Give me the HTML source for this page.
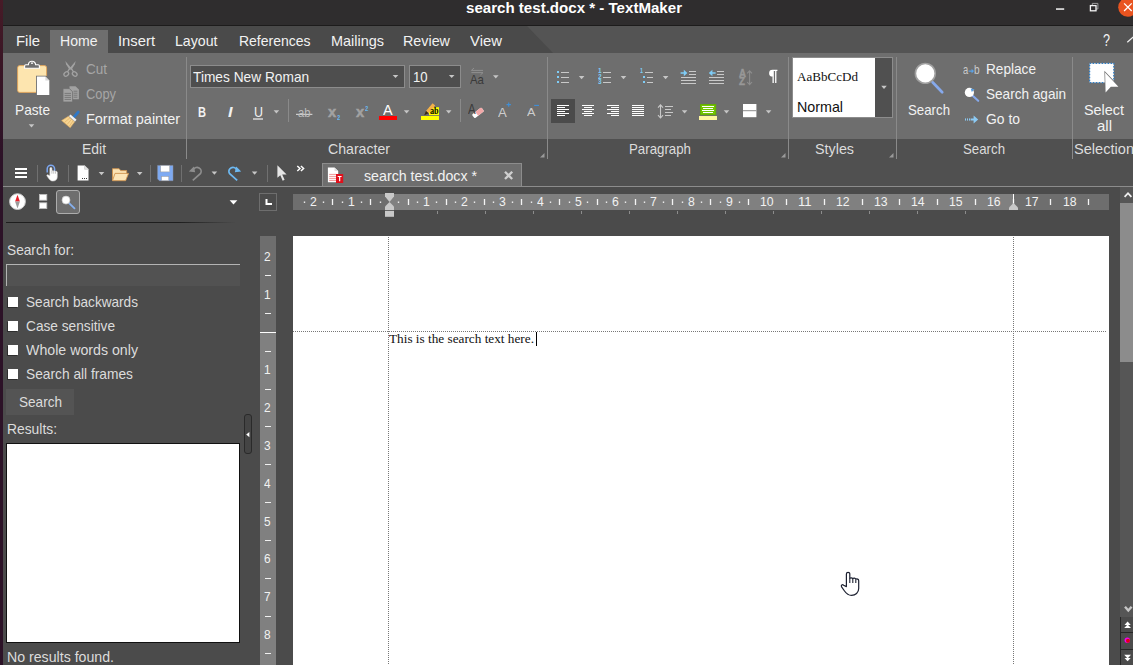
<!DOCTYPE html>
<html><head><meta charset="utf-8"><title>search test.docx * - TextMaker</title>
<style>
html,body{margin:0;padding:0;}
body{width:1133px;height:665px;overflow:hidden;background:#4b4b4b;position:relative;font-family:"Liberation Sans",sans-serif;}
.r{position:absolute;}
.t{position:absolute;white-space:pre;line-height:1;transform-origin:0 0;}
svg{position:absolute;left:0;top:0;}
#root{position:absolute;left:0;top:0;width:1133px;height:665px;overflow:hidden;}
</style></head><body><div id="root">
<div class="r" style="left:0px;top:0px;width:3px;height:665px;background:linear-gradient(#471b27 0px,#3a1625 60px,#2c1227 160px,#2c1227 665px);"></div>
<div class="r" style="left:3px;top:0px;width:1130px;height:25px;background:#2f2d2e;"></div>
<div class="r" style="left:3px;top:25px;width:1130px;height:1px;background:#1d1c1c;"></div>
<div class="r" style="left:3px;top:26px;width:1130px;height:27px;background:#4a4a4a;"></div>
<svg width="1133" height="665" viewBox="0 0 1133 665"><polygon points="527,26 1133,26 1133,53 553,53" fill="#545454"/></svg>
<div class="r" style="left:50px;top:30px;width:58px;height:23px;background:#6e6e6e;"></div>
<div class="r" style="left:3px;top:53px;width:1130px;height:86px;background:#6e6e6e;"></div>
<div class="r" style="left:3px;top:139px;width:1130px;height:47px;background:#505050;"></div>
<div class="r" style="left:3px;top:186px;width:1130px;height:1px;background:#8c8c8c;"></div>
<div class="r" style="left:322px;top:163px;width:200px;height:23px;background:#6e6e6e;box-sizing:border-box;border:1px solid #8c8c8c;border-bottom:none;"></div>
<div class="r" style="left:293px;top:236px;width:816px;height:429px;background:#ffffff;"></div>
<div class="r" style="left:293px;top:194px;width:816px;height:16px;background:#6e6e6e;"></div>
<div class="r" style="left:390px;top:194px;width:623px;height:16px;background:#808080;"></div>
<div class="r" style="left:260px;top:236px;width:16px;height:429px;background:#808080;"></div>
<div class="r" style="left:260px;top:236px;width:16px;height:96px;background:#6e6e6e;"></div>
<div class="r" style="left:1120px;top:187px;width:13px;height:430px;background:#565656;"></div>
<div class="r" style="left:1120px;top:203px;width:13px;height:159px;background:#8c8c8c;"></div>
<div class="r" style="left:1120px;top:617px;width:13px;height:48px;background:#4b4b4b;"></div>
<div class="r" style="left:1120px;top:617px;width:1px;height:48px;background:#262626;"></div>
<div class="r" style="left:1120px;top:632px;width:13px;height:1px;background:#262626;"></div>
<div class="r" style="left:1120px;top:649px;width:13px;height:1px;background:#262626;"></div>
<div class="r" style="left:186px;top:57px;width:1px;height:102px;background:#8a8a8a;"></div>
<div class="r" style="left:547px;top:57px;width:1px;height:102px;background:#8a8a8a;"></div>
<div class="r" style="left:788px;top:57px;width:1px;height:102px;background:#8a8a8a;"></div>
<div class="r" style="left:896px;top:57px;width:1px;height:102px;background:#8a8a8a;"></div>
<div class="r" style="left:1072px;top:57px;width:1px;height:102px;background:#8a8a8a;"></div>
<div class="r" style="left:288px;top:99px;width:1px;height:23px;background:#8a8a8a;"></div>
<div class="r" style="left:460px;top:99px;width:1px;height:23px;background:#8a8a8a;"></div>
<div class="r" style="left:37px;top:165px;width:1px;height:17px;background:#707070;"></div>
<div class="r" style="left:68px;top:165px;width:1px;height:17px;background:#707070;"></div>
<div class="r" style="left:150px;top:165px;width:1px;height:17px;background:#707070;"></div>
<div class="r" style="left:181px;top:165px;width:1px;height:17px;background:#707070;"></div>
<div class="r" style="left:267px;top:165px;width:1px;height:17px;background:#707070;"></div>
<div class="r" style="left:190px;top:65px;width:215px;height:23px;background:#4e4e4e;box-sizing:border-box;border:1px solid #8c8c8c;"></div>
<div class="r" style="left:409px;top:65px;width:52px;height:23px;background:#4e4e4e;box-sizing:border-box;border:1px solid #8c8c8c;"></div>
<div class="r" style="left:551px;top:99px;width:24px;height:24px;background:#4b4b4b;"></div>
<div class="r" style="left:792px;top:57px;width:101px;height:61px;background:#505050;box-sizing:border-box;border:1px solid #8c8c8c;"></div>
<div class="r" style="left:793px;top:58px;width:82px;height:59px;background:#ffffff;"></div>
<div class="r" style="left:6px;top:222px;width:230px;height:1px;background:linear-gradient(90deg,#1e1e1e 0%,#1e1e1e 75%,#4b4b4b 100%);"></div>
<div class="r" style="left:6px;top:264px;width:234px;height:22px;background:#525252;box-sizing:border-box;border-top:1px solid #b4b4b4;border-left:1px solid #b4b4b4;"></div>
<div class="r" style="left:8px;top:297px;width:10px;height:10px;background:#ffffff;box-shadow:-1px 1px 0 #2e2e2e;"></div>
<div class="r" style="left:8px;top:321px;width:10px;height:10px;background:#ffffff;box-shadow:-1px 1px 0 #2e2e2e;"></div>
<div class="r" style="left:8px;top:345px;width:10px;height:10px;background:#ffffff;box-shadow:-1px 1px 0 #2e2e2e;"></div>
<div class="r" style="left:8px;top:369px;width:10px;height:10px;background:#ffffff;box-shadow:-1px 1px 0 #2e2e2e;"></div>
<div class="r" style="left:6px;top:389px;width:68px;height:26px;background:#545454;"></div>
<div class="r" style="left:6px;top:443px;width:234px;height:200px;background:#ffffff;box-sizing:border-box;border:1px solid #111;"></div>
<div class="r" style="left:244px;top:414px;width:8px;height:40px;background:#444444;box-sizing:border-box;border:1px solid #2a2a2a;border-radius:3px;"></div>
<div class="r" style="left:56px;top:190px;width:24px;height:24px;background:#6e6e6e;box-sizing:border-box;border:1px solid #adadad;border-radius:3px;"></div>
<div class="r" style="left:259px;top:193px;width:18px;height:18px;background:#4b4b4b;box-sizing:border-box;border:1px solid #6e6e6e;"></div>
<div class="t" style="left:466.00px;top:0.73px;font-size:14.5px;color:#ffffff;transform:scaleX(1.0402);font-weight:bold;">search test.docx * - TextMaker</div>
<div class="t" style="left:16.00px;top:33.73px;font-size:14.5px;color:#f2f2f2;transform:scaleX(1.0274);">File</div>
<div class="t" style="left:60.00px;top:33.73px;font-size:14.5px;color:#f2f2f2;transform:scaleX(0.9693);">Home</div>
<div class="t" style="left:118.00px;top:33.73px;font-size:14.5px;color:#f2f2f2;transform:scaleX(1.0203);">Insert</div>
<div class="t" style="left:175.00px;top:33.73px;font-size:14.5px;color:#f2f2f2;transform:scaleX(0.9764);">Layout</div>
<div class="t" style="left:238.50px;top:33.73px;font-size:14.5px;color:#f2f2f2;transform:scaleX(0.9642);">References</div>
<div class="t" style="left:330.50px;top:33.73px;font-size:14.5px;color:#f2f2f2;transform:scaleX(0.9965);">Mailings</div>
<div class="t" style="left:403.00px;top:33.73px;font-size:14.5px;color:#f2f2f2;transform:scaleX(0.9876);">Review</div>
<div class="t" style="left:470.00px;top:33.73px;font-size:14.5px;color:#f2f2f2;transform:scaleX(1.0255);">View</div>
<div class="t" style="left:1103.40px;top:31.61px;font-size:17px;color:#f2f2f2;transform:scaleX(0.7406);">?</div>
<div class="t" style="left:14.50px;top:102.73px;font-size:14.5px;color:#f2f2f2;transform:scaleX(0.9440);">Paste</div>
<div class="t" style="left:86.00px;top:61.73px;font-size:14.5px;color:#a6a6a6;transform:scaleX(0.9308);">Cut</div>
<div class="t" style="left:86.00px;top:86.73px;font-size:14.5px;color:#a6a6a6;transform:scaleX(0.8864);">Copy</div>
<div class="t" style="left:86.00px;top:111.73px;font-size:14.5px;color:#f2f2f2;transform:scaleX(0.9970);">Format painter</div>
<div class="t" style="left:193.40px;top:69.73px;font-size:14.5px;color:#f2f2f2;transform:scaleX(0.9467);">Times New Roman</div>
<div class="t" style="left:412.80px;top:69.73px;font-size:14.5px;color:#f2f2f2;transform:scaleX(0.9055);">10</div>
<div class="t" style="left:797.00px;top:70.11px;font-size:13px;color:#111;transform:scaleX(1.0056);font-family:'Liberation Serif', serif;">AaBbCcDd</div>
<div class="t" style="left:797.00px;top:99.73px;font-size:14.5px;color:#111;transform:scaleX(0.9843);">Normal</div>
<div class="t" style="left:908.00px;top:102.73px;font-size:14.5px;color:#f2f2f2;transform:scaleX(0.9143);">Search</div>
<div class="t" style="left:986.00px;top:61.73px;font-size:14.5px;color:#f2f2f2;transform:scaleX(0.9398);">Replace</div>
<div class="t" style="left:986.00px;top:86.73px;font-size:14.5px;color:#f2f2f2;transform:scaleX(0.9362);">Search again</div>
<div class="t" style="left:986.00px;top:111.73px;font-size:14.5px;color:#f2f2f2;transform:scaleX(0.9586);">Go to</div>
<div class="t" style="left:1084.00px;top:102.73px;font-size:14.5px;color:#f2f2f2;transform:scaleX(0.9927);">Select</div>
<div class="t" style="left:1097.00px;top:118.73px;font-size:14.5px;color:#f2f2f2;transform:scaleX(1.0334);">all</div>
<div class="t" style="left:82.00px;top:141.73px;font-size:14.5px;color:#dcdcdc;transform:scaleX(0.9606);">Edit</div>
<div class="t" style="left:328.00px;top:141.73px;font-size:14.5px;color:#dcdcdc;transform:scaleX(0.9738);">Character</div>
<div class="t" style="left:629.00px;top:141.73px;font-size:14.5px;color:#dcdcdc;transform:scaleX(0.9156);">Paragraph</div>
<div class="t" style="left:815.00px;top:141.73px;font-size:14.5px;color:#dcdcdc;transform:scaleX(0.9878);">Styles</div>
<div class="t" style="left:963.00px;top:141.73px;font-size:14.5px;color:#dcdcdc;transform:scaleX(0.9143);">Search</div>
<div class="t" style="left:1074.00px;top:141.73px;font-size:14.5px;color:#dcdcdc;transform:scaleX(1.0058);">Selection</div>
<div class="t" style="left:364.00px;top:168.73px;font-size:14.5px;color:#f2f2f2;transform:scaleX(0.9805);">search test.docx *</div>
<div class="t" style="left:7.00px;top:242.73px;font-size:14.5px;color:#dcdcdc;transform:scaleX(0.9447);">Search for:</div>
<div class="t" style="left:26.00px;top:294.73px;font-size:14.5px;color:#dcdcdc;transform:scaleX(0.9390);">Search backwards</div>
<div class="t" style="left:26.00px;top:318.73px;font-size:14.5px;color:#dcdcdc;transform:scaleX(0.9439);">Case sensitive</div>
<div class="t" style="left:26.00px;top:342.73px;font-size:14.5px;color:#dcdcdc;transform:scaleX(0.9787);">Whole words only</div>
<div class="t" style="left:26.00px;top:366.73px;font-size:14.5px;color:#dcdcdc;transform:scaleX(0.9484);">Search all frames</div>
<div class="t" style="left:19.00px;top:394.73px;font-size:14.5px;color:#dcdcdc;transform:scaleX(0.9361);">Search</div>
<div class="t" style="left:7.00px;top:421.73px;font-size:14.5px;color:#dcdcdc;transform:scaleX(0.9547);">Results:</div>
<div class="t" style="left:7.00px;top:649.73px;font-size:14.5px;color:#dcdcdc;transform:scaleX(0.9761);">No results found.</div>
<div class="t" style="left:389.00px;top:331.86px;font-size:13.3px;color:#111;transform:scaleX(0.9965);font-family:'Liberation Serif', serif;">This is the search text here.</div>
<div class="r" style="left:536px;top:332px;width:1px;height:14px;background:#000;"></div>
<div class="t" style="left:310.00px;top:194.94px;font-size:13.3px;color:#f2f2f2;transform:scaleX(0.9196);">2</div>
<div class="t" style="left:347.80px;top:194.94px;font-size:13.3px;color:#f2f2f2;transform:scaleX(0.9196);">1</div>
<div class="t" style="left:423.40px;top:194.94px;font-size:13.3px;color:#f2f2f2;transform:scaleX(0.9196);">1</div>
<div class="t" style="left:461.20px;top:194.94px;font-size:13.3px;color:#f2f2f2;transform:scaleX(0.9196);">2</div>
<div class="t" style="left:499.00px;top:194.94px;font-size:13.3px;color:#f2f2f2;transform:scaleX(0.9196);">3</div>
<div class="t" style="left:536.80px;top:194.94px;font-size:13.3px;color:#f2f2f2;transform:scaleX(0.9196);">4</div>
<div class="t" style="left:574.60px;top:194.94px;font-size:13.3px;color:#f2f2f2;transform:scaleX(0.9196);">5</div>
<div class="t" style="left:612.40px;top:194.94px;font-size:13.3px;color:#f2f2f2;transform:scaleX(0.9196);">6</div>
<div class="t" style="left:650.20px;top:194.94px;font-size:13.3px;color:#f2f2f2;transform:scaleX(0.9196);">7</div>
<div class="t" style="left:688.00px;top:194.94px;font-size:13.3px;color:#f2f2f2;transform:scaleX(0.9196);">8</div>
<div class="t" style="left:725.80px;top:194.94px;font-size:13.3px;color:#f2f2f2;transform:scaleX(0.9196);">9</div>
<div class="t" style="left:760.20px;top:194.94px;font-size:13.3px;color:#f2f2f2;transform:scaleX(0.9196);">10</div>
<div class="t" style="left:798.00px;top:194.94px;font-size:13.3px;color:#f2f2f2;transform:scaleX(0.9851);">11</div>
<div class="t" style="left:835.80px;top:194.94px;font-size:13.3px;color:#f2f2f2;transform:scaleX(0.9196);">12</div>
<div class="t" style="left:873.60px;top:194.94px;font-size:13.3px;color:#f2f2f2;transform:scaleX(0.9196);">13</div>
<div class="t" style="left:911.40px;top:194.94px;font-size:13.3px;color:#f2f2f2;transform:scaleX(0.9196);">14</div>
<div class="t" style="left:949.20px;top:194.94px;font-size:13.3px;color:#f2f2f2;transform:scaleX(0.9196);">15</div>
<div class="t" style="left:987.00px;top:194.94px;font-size:13.3px;color:#f2f2f2;transform:scaleX(0.9196);">16</div>
<div class="t" style="left:1024.80px;top:194.94px;font-size:13.3px;color:#f2f2f2;transform:scaleX(0.9196);">17</div>
<div class="t" style="left:1062.60px;top:194.94px;font-size:13.3px;color:#f2f2f2;transform:scaleX(0.9196);">18</div>
<svg width="1133" height="665" viewBox="0 0 1133 665" shape-rendering="crispEdges"><rect x="303.8" y="201.5" width="1.4" height="1.4" fill="#f4f4f4" shape-rendering="auto"/><rect x="322.8" y="201.5" width="1.4" height="1.4" fill="#f4f4f4" shape-rendering="auto"/><rect x="331.85" y="199" width="1.3" height="6" fill="#f4f4f4" shape-rendering="auto"/><rect x="341.8" y="201.5" width="1.4" height="1.4" fill="#f4f4f4" shape-rendering="auto"/><rect x="360.8" y="201.5" width="1.4" height="1.4" fill="#f4f4f4" shape-rendering="auto"/><rect x="369.85" y="199" width="1.3" height="6" fill="#f4f4f4" shape-rendering="auto"/><rect x="379.8" y="201.5" width="1.4" height="1.4" fill="#f4f4f4" shape-rendering="auto"/><rect x="397.8" y="201.5" width="1.4" height="1.4" fill="#f4f4f4" shape-rendering="auto"/><rect x="407.85" y="199" width="1.3" height="6" fill="#f4f4f4" shape-rendering="auto"/><rect x="416.8" y="201.5" width="1.4" height="1.4" fill="#f4f4f4" shape-rendering="auto"/><rect x="435.8" y="201.5" width="1.4" height="1.4" fill="#f4f4f4" shape-rendering="auto"/><rect x="445.85" y="199" width="1.3" height="6" fill="#f4f4f4" shape-rendering="auto"/><rect x="454.8" y="201.5" width="1.4" height="1.4" fill="#f4f4f4" shape-rendering="auto"/><rect x="473.8" y="201.5" width="1.4" height="1.4" fill="#f4f4f4" shape-rendering="auto"/><rect x="483.85" y="199" width="1.3" height="6" fill="#f4f4f4" shape-rendering="auto"/><rect x="492.8" y="201.5" width="1.4" height="1.4" fill="#f4f4f4" shape-rendering="auto"/><rect x="511.8" y="201.5" width="1.4" height="1.4" fill="#f4f4f4" shape-rendering="auto"/><rect x="520.85" y="199" width="1.3" height="6" fill="#f4f4f4" shape-rendering="auto"/><rect x="530.8" y="201.5" width="1.4" height="1.4" fill="#f4f4f4" shape-rendering="auto"/><rect x="549.8" y="201.5" width="1.4" height="1.4" fill="#f4f4f4" shape-rendering="auto"/><rect x="558.85" y="199" width="1.3" height="6" fill="#f4f4f4" shape-rendering="auto"/><rect x="568.8" y="201.5" width="1.4" height="1.4" fill="#f4f4f4" shape-rendering="auto"/><rect x="586.8" y="201.5" width="1.4" height="1.4" fill="#f4f4f4" shape-rendering="auto"/><rect x="596.85" y="199" width="1.3" height="6" fill="#f4f4f4" shape-rendering="auto"/><rect x="605.8" y="201.5" width="1.4" height="1.4" fill="#f4f4f4" shape-rendering="auto"/><rect x="624.8" y="201.5" width="1.4" height="1.4" fill="#f4f4f4" shape-rendering="auto"/><rect x="634.85" y="199" width="1.3" height="6" fill="#f4f4f4" shape-rendering="auto"/><rect x="643.8" y="201.5" width="1.4" height="1.4" fill="#f4f4f4" shape-rendering="auto"/><rect x="662.8" y="201.5" width="1.4" height="1.4" fill="#f4f4f4" shape-rendering="auto"/><rect x="671.85" y="199" width="1.3" height="6" fill="#f4f4f4" shape-rendering="auto"/><rect x="681.8" y="201.5" width="1.4" height="1.4" fill="#f4f4f4" shape-rendering="auto"/><rect x="700.8" y="201.5" width="1.4" height="1.4" fill="#f4f4f4" shape-rendering="auto"/><rect x="709.85" y="199" width="1.3" height="6" fill="#f4f4f4" shape-rendering="auto"/><rect x="719.8" y="201.5" width="1.4" height="1.4" fill="#f4f4f4" shape-rendering="auto"/><rect x="738.8" y="201.5" width="1.4" height="1.4" fill="#f4f4f4" shape-rendering="auto"/><rect x="747.85" y="199" width="1.3" height="6" fill="#f4f4f4" shape-rendering="auto"/><rect x="785.85" y="199" width="1.3" height="6" fill="#f4f4f4" shape-rendering="auto"/><rect x="823.85" y="199" width="1.3" height="6" fill="#f4f4f4" shape-rendering="auto"/><rect x="861.85" y="199" width="1.3" height="6" fill="#f4f4f4" shape-rendering="auto"/><rect x="898.85" y="199" width="1.3" height="6" fill="#f4f4f4" shape-rendering="auto"/><rect x="936.85" y="199" width="1.3" height="6" fill="#f4f4f4" shape-rendering="auto"/><rect x="974.85" y="199" width="1.3" height="6" fill="#f4f4f4" shape-rendering="auto"/><rect x="1012.85" y="199" width="1.3" height="6" fill="#f4f4f4" shape-rendering="auto"/><rect x="1049.85" y="199" width="1.3" height="6" fill="#f4f4f4" shape-rendering="auto"/><rect x="1087.85" y="199" width="1.3" height="6" fill="#f4f4f4" shape-rendering="auto"/><rect x="437" y="211" width="1" height="3" fill="#8c8c8c"/><rect x="485" y="211" width="1" height="3" fill="#8c8c8c"/><rect x="533" y="211" width="1" height="3" fill="#8c8c8c"/><rect x="581" y="211" width="1" height="3" fill="#8c8c8c"/><rect x="629" y="211" width="1" height="3" fill="#8c8c8c"/><rect x="677" y="211" width="1" height="3" fill="#8c8c8c"/><rect x="725" y="211" width="1" height="3" fill="#8c8c8c"/><rect x="773" y="211" width="1" height="3" fill="#8c8c8c"/><rect x="821" y="211" width="1" height="3" fill="#8c8c8c"/><rect x="869" y="211" width="1" height="3" fill="#8c8c8c"/><rect x="917" y="211" width="1" height="3" fill="#8c8c8c"/><rect x="965" y="211" width="1" height="3" fill="#8c8c8c"/><rect x="260" y="332" width="16" height="1" fill="#ffffff"/><rect x="265" y="275" width="6" height="1" fill="#f0f0f0"/><rect x="265" y="313" width="6" height="1" fill="#f0f0f0"/><rect x="265" y="351" width="6" height="1" fill="#f0f0f0"/><rect x="265" y="389" width="6" height="1" fill="#f0f0f0"/><rect x="265" y="426" width="6" height="1" fill="#f0f0f0"/><rect x="265" y="464" width="6" height="1" fill="#f0f0f0"/><rect x="265" y="502" width="6" height="1" fill="#f0f0f0"/><rect x="265" y="540" width="6" height="1" fill="#f0f0f0"/><rect x="265" y="578" width="6" height="1" fill="#f0f0f0"/><rect x="265" y="616" width="6" height="1" fill="#f0f0f0"/><rect x="265" y="653" width="6" height="1" fill="#f0f0f0"/></svg>
<div class="t" style="left:264.40px;top:250.00px;font-size:13px;color:#f2f2f2;transform:scaleX(0.9131);">2</div>
<div class="t" style="left:264.40px;top:287.80px;font-size:13px;color:#f2f2f2;transform:scaleX(0.9131);">1</div>
<div class="t" style="left:264.40px;top:363.40px;font-size:13px;color:#f2f2f2;transform:scaleX(0.9131);">1</div>
<div class="t" style="left:264.40px;top:401.20px;font-size:13px;color:#f2f2f2;transform:scaleX(0.9131);">2</div>
<div class="t" style="left:264.40px;top:439.00px;font-size:13px;color:#f2f2f2;transform:scaleX(0.9131);">3</div>
<div class="t" style="left:264.40px;top:476.80px;font-size:13px;color:#f2f2f2;transform:scaleX(0.9131);">4</div>
<div class="t" style="left:264.40px;top:514.60px;font-size:13px;color:#f2f2f2;transform:scaleX(0.9131);">5</div>
<div class="t" style="left:264.40px;top:552.40px;font-size:13px;color:#f2f2f2;transform:scaleX(0.9131);">6</div>
<div class="t" style="left:264.40px;top:590.20px;font-size:13px;color:#f2f2f2;transform:scaleX(0.9131);">7</div>
<div class="t" style="left:264.40px;top:628.00px;font-size:13px;color:#f2f2f2;transform:scaleX(0.9131);">8</div>
<svg width="1133" height="665" viewBox="0 0 1133 665" shape-rendering="crispEdges"><line x1="293" y1="331.5" x2="1107" y2="331.5" stroke="#777" stroke-width="1" stroke-dasharray="1,1"/><line x1="388.5" y1="237" x2="388.5" y2="665" stroke="#777" stroke-width="1" stroke-dasharray="1,1"/><line x1="1013.5" y1="237" x2="1013.5" y2="665" stroke="#777" stroke-width="1" stroke-dasharray="1,1"/></svg>
<svg width="1133" height="665" viewBox="0 0 1133 665"><polygon points="28.7,124.2 34.3,124.2 31.5,127.4" fill="#c6c6c6"/><polygon points="273.6,110.2 279.20000000000005,110.2 276.40000000000003,113.4" fill="#c6c6c6"/><polygon points="392.7,74.9 398.3,74.9 395.5,78.10000000000001" fill="#c6c6c6"/><polygon points="448.9,74.9 454.5,74.9 451.7,78.10000000000001" fill="#c6c6c6"/><polygon points="493,75.2 498.6,75.2 495.8,78.4" fill="#c6c6c6"/><polygon points="403.8,110.2 409.40000000000003,110.2 406.6,113.4" fill="#c6c6c6"/><polygon points="445.9,110.2 451.5,110.2 448.7,113.4" fill="#c6c6c6"/><polygon points="578.8,76 584.4,76 581.5999999999999,79.2" fill="#c6c6c6"/><polygon points="620.7,76 626.3000000000001,76 623.5,79.2" fill="#c6c6c6"/><polygon points="662.8,76 668.4,76 665.5999999999999,79.2" fill="#c6c6c6"/><polygon points="681.8,110.2 687.4,110.2 684.5999999999999,113.4" fill="#c6c6c6"/><polygon points="723.7,110.2 729.3000000000001,110.2 726.5,113.4" fill="#c6c6c6"/><polygon points="765.8,110.2 771.4,110.2 768.5999999999999,113.4" fill="#c6c6c6"/><polygon points="881.2,85.8 886.8000000000001,85.8 884.0,89.0" fill="#c6c6c6"/><polygon points="98.7,172 104.3,172 101.5,175.2" fill="#c6c6c6"/><polygon points="136.9,172 142.5,172 139.70000000000002,175.2" fill="#c6c6c6"/><polygon points="211.6,171.5 217.2,171.5 214.4,174.7" fill="#c6c6c6"/><polygon points="251.8,171.5 257.40000000000003,171.5 254.60000000000002,174.7" fill="#c6c6c6"/><polygon points="229.6,200.2 237.4,200.2 233.5,204.39999999999998" fill="#ffffff"/><polygon points="544.5,153 544.5,157.5 540,157.5" fill="#9a9a9a"/><polygon points="785.5,153 785.5,157.5 781,157.5" fill="#9a9a9a"/><polygon points="893.5,153 893.5,157.5 889,157.5" fill="#9a9a9a"/><rect x="1056" y="8.300" width="8.200" height="1.500" fill="#f4f4f4"/><path d="M1092.3 5.2V3.4h5.6v5.6h-1.8" fill="none" stroke="#9a9a9a" stroke-width="1"/><rect x="1090.4" y="5.6" width="5.6" height="5.2" fill="none" stroke="#f4f4f4" stroke-width="1.3"/><circle cx="1127.8" cy="7.2" r="9.6" fill="#e95420"/><path d="M1124.1 3.4l7.6 7.6M1131.7 3.4l-7.6 7.6" stroke="#ffffff" stroke-width="1.3" fill="none"/><path d="M1127.3 42.2l6 -5.2" stroke="#f0f0f0" stroke-width="1.3" fill="none"/><rect x="17.6" y="65.6" width="29" height="26.8" rx="2.2" fill="#fde5af" stroke="#e3a458" stroke-width="0.9"/><path d="M24.6 68.2v-2.2a1.2 1.2 0 0 1 1.2-1.2h2.6a3.6 3.6 0 0 1 7.2 0h2.6a1.2 1.2 0 0 1 1.2 1.2v2.2z" fill="#6e6e6e" stroke="#ffffff" stroke-width="1.1"/><circle cx="32" cy="63.2" r="0.9" fill="#ffffff"/><path d="M36 75.8h10.4l3.6 3.6v16.4h-14z" fill="#6e6e6e"/><path d="M36.9 76.600h8.500l3.900 3.900v14.600h-12.400z" fill="#ffffff"/><path d="M45.400 76.600l3.900 3.900h-3.900z" fill="#d9d9d9"/><g fill="#a2a2a2"><path d="M65.300 61l6.300 7.400-1.900 1.600-3.600-5.800z"/><path d="M75.700 61l-6.300 7.400 1.900 1.600 3.600-5.800z"/></g><g fill="none" stroke="#a2a2a2" stroke-width="1.300"><path d="M69.600 68.600l-2.200 3.400M71.400 68.600l2.200 3.400"/><ellipse cx="66.300" cy="74" rx="2.600" ry="1.900" transform="rotate(-40 66.300 74)"/><ellipse cx="74.700" cy="74" rx="2.600" ry="1.900" transform="rotate(40 74.700 74)"/></g><path d="M69.5 86.2h6l3.4 3.4v9.6h-9.4z" fill="#a2a2a2"/><path d="M63 88.6h6.4l3.2 3.2v10.2h-9.6z" fill="#a2a2a2" stroke="#6e6e6e" stroke-width="0.8"/><g stroke="#6e6e6e" stroke-width="0.8"><path d="M64.6 93.4h6.4M64.6 95.4h6.4M64.6 97.4h6.4M64.6 99.4h6.4M73.6 91.2h3.8M73.6 93.2h3.8M73.6 95.2h3.8M73.6 97.2h3.8"/></g><path d="M78.300 112l-4.600 5.400" stroke="#2f78c8" stroke-width="2.700" stroke-linecap="round" fill="none"/><path d="M68.400 116.300l6.300 5.500-4.500 6-8.600-7.200z" fill="#f6d491" stroke="#dba85c" stroke-width="0.600"/><g stroke="#dba85c" stroke-width="0.600" fill="none"><path d="M70 117.800l-5.600 4.800M71.600 119.200l-4.600 5.400M73.200 120.600l-3.800 5.600"/></g><path d="M69.700 115.300l6.100 5.300" stroke="#f2f2f2" stroke-width="2.300" fill="none"/><path d="M68.800 116.300l6.100 5.300" stroke="#bdbdbd" stroke-width="0.500" fill="none"/><rect x="253" y="118.4" width="10" height="1.2" fill="#f2f2f2"/><rect x="296" y="113.8" width="16.4" height="1.1" fill="#d6d6d6"/><rect x="379" y="116" width="18" height="4.2" fill="#ff0000" shape-rendering="crispEdges"/><rect x="421" y="116" width="18" height="4.2" fill="#ffff00" shape-rendering="crispEdges"/><rect x="429" y="107.2" width="10" height="8" fill="#ffff00"/><path d="M432.6 103.2l2.600 2.200-6.600 7.800-2.600-2.200z" fill="#f2b04a"/><path d="M426 111l2.600 2.200-4.400 2z" fill="#3a2a10"/><g transform="rotate(-38 478 112.900)"><rect x="472" y="110.500" width="12" height="4.800" rx="1.200" fill="#ffffff"/><path d="M476.400 110.500h6.400a1.200 1.200 0 0 1 1.200 1.200v2.400a1.200 1.200 0 0 1-1.200 1.200h-6.400z" fill="#f2a8a8"/></g><path d="M506.500 104.600h4.400M508.700 102.400v4.400" stroke="#3f8fd8" stroke-width="1.100"/><path d="M534.200 105.400h4.800" stroke="#3f8fd8" stroke-width="1.100"/><g stroke="#909090" stroke-width="1" fill="none"><path d="M471.4 70.400h11.600M474 68l-2.600 2.400M471.400 72.600h11.600M480.400 75l2.600-2.400"/></g><g shape-rendering="crispEdges"><rect x="557" y="71" width="2" height="2" fill="#7fcdf7"/><rect x="561" y="71.5" width="8" height="1" fill="#c9c9c9"/><rect x="603" y="71.5" width="8" height="1" fill="#c9c9c9"/><rect x="557" y="76" width="2" height="2" fill="#7fcdf7"/><rect x="561" y="76.5" width="8" height="1" fill="#c9c9c9"/><rect x="603" y="76.5" width="8" height="1" fill="#c9c9c9"/><rect x="557" y="81" width="2" height="2" fill="#7fcdf7"/><rect x="561" y="81.5" width="8" height="1" fill="#c9c9c9"/><rect x="603" y="81.5" width="8" height="1" fill="#c9c9c9"/><rect x="645" y="71.5" width="8" height="1" fill="#c9c9c9"/><rect x="643" y="76" width="2" height="2" fill="#7fcdf7"/><rect x="647" y="76.5" width="6" height="1" fill="#c9c9c9"/><rect x="643" y="81" width="2" height="2" fill="#7fcdf7"/><rect x="647" y="81.5" width="6" height="1" fill="#c9c9c9"/><rect x="689" y="71" width="7" height="1" fill="#c9c9c9"/><rect x="689" y="74" width="7" height="1" fill="#c9c9c9"/><rect x="681" y="77" width="15" height="1" fill="#c9c9c9"/><rect x="681" y="80" width="15" height="1" fill="#c9c9c9"/><rect x="681" y="83" width="15" height="1" fill="#c9c9c9"/><rect x="717" y="71" width="7" height="1" fill="#c9c9c9"/><rect x="717" y="74" width="7" height="1" fill="#c9c9c9"/><rect x="709" y="77" width="15" height="1" fill="#c9c9c9"/><rect x="709" y="80" width="15" height="1" fill="#c9c9c9"/><rect x="709" y="83" width="15" height="1" fill="#c9c9c9"/></g><path d="M680.6 72.2h3.2v-2.4l3.6 3.2-3.6 3.2v-2.4h-3.2z" fill="#7fcdf7"/><path d="M715.6 72.2h-3.2v-2.4l-3.6 3.2 3.6 3.2v-2.4h3.2z" fill="#7fcdf7"/><g stroke="#8e8e8e" stroke-width="1.1" fill="none"><path d="M749.6 71v13.4M747.2 73.4l2.4-2.6 2.4 2.6M747.2 82l2.4 2.6 2.4-2.6"/></g><path d="M772.6 69.8h4.8v1.2h-1v12h-1.3v-12h-1.3v12h-1.3v-6.4a3.4 3.4 0 0 1 0-6.8z" fill="#ffffff"/><g shape-rendering="crispEdges" fill="#ffffff"><rect x="557" y="105" width="12" height="1"/><rect x="582" y="105" width="12" height="1"/><rect x="607" y="105" width="12" height="1"/><rect x="632" y="105" width="12" height="1"/><rect x="557" y="107" width="8" height="1"/><rect x="584" y="107" width="8" height="1"/><rect x="611" y="107" width="8" height="1"/><rect x="632" y="107" width="12" height="1"/><rect x="557" y="109" width="12" height="1"/><rect x="582" y="109" width="12" height="1"/><rect x="607" y="109" width="12" height="1"/><rect x="632" y="109" width="12" height="1"/><rect x="557" y="111" width="8" height="1"/><rect x="584" y="111" width="8" height="1"/><rect x="611" y="111" width="8" height="1"/><rect x="632" y="111" width="12" height="1"/><rect x="557" y="113" width="12" height="1"/><rect x="582" y="113" width="12" height="1"/><rect x="607" y="113" width="12" height="1"/><rect x="632" y="113" width="12" height="1"/><rect x="557" y="115" width="8" height="1"/><rect x="584" y="115" width="8" height="1"/><rect x="611" y="115" width="8" height="1"/><rect x="632" y="115" width="12" height="1"/></g><g stroke="#c9c9c9" stroke-width="1.1" fill="none"><path d="M660.5 105.2v12.4M658 107.6l2.5-2.8 2.5 2.8M658 115.2l2.5 2.8 2.5-2.8"/></g><g shape-rendering="crispEdges" fill="#c9c9c9"><rect x="665" y="106" width="8" height="1"/><rect x="665" y="109" width="6" height="1"/><rect x="665" y="112" width="8" height="1"/><rect x="665" y="115" width="6" height="1"/></g><rect x="699" y="116" width="18" height="4.2" fill="#fdf6a0" shape-rendering="crispEdges"/><rect x="700.4" y="104.4" width="15.4" height="10.4" fill="#73c500" stroke="#62ad00" stroke-width="0.8"/><g shape-rendering="crispEdges" fill="#ffffff"><rect x="702" y="106" width="12" height="1"/><rect x="703" y="108" width="10" height="1"/><rect x="702" y="110" width="12" height="1"/><rect x="703" y="112" width="10" height="1"/></g><rect x="743" y="104" width="13.4" height="13.2" fill="#ffffff"/><rect x="743" y="110.2" width="13.4" height="1" fill="#8a8a8a"/><path d="M932.600 82.200l9.600 10" stroke="#86a9ec" stroke-width="2.700" stroke-linecap="round"/><circle cx="925.3" cy="73.4" r="9.9" fill="#ffffff" stroke="#a0a0a0" stroke-width="1.6"/><path d="M968.6 70.5h3v-1.800l2.400 2.400-2.400 2.400v-1.800h-3z" fill="#5aa2e6"/><path d="M972.4 95.4l5.800 5.400" stroke="#86a9ec" stroke-width="2.100" stroke-linecap="round"/><circle cx="969.4" cy="92.4" r="4.6" fill="#ffffff"/><path d="M970.6 88.6l4 0.6-2.8 2.8z" fill="#5a9fe0"/><g fill="#8ccaf4"><rect x="965" y="118.4" width="1" height="2.2"/><rect x="967" y="118.4" width="1" height="2.2"/><rect x="969" y="118.4" width="1.4" height="2.2"/><path d="M971 118.4h2.6v-2.8l4.6 3.9-4.6 3.9v-2.8h-2.6z"/></g><rect x="1089.6" y="63.3" width="24.2" height="19.3" fill="#ffffff" stroke="#2f7fc8" stroke-width="1.3" stroke-dasharray="1.5,1.5"/><path d="M1104.400 70.800l0.600 23.200 6.200-6.600h9.200z" fill="#6e6e6e"/><path d="M1105.100 72.600l0.500 19.800 5.200-5.600h7.600z" fill="#ffffff"/><g shape-rendering="crispEdges" fill="#ffffff"><rect x="15" y="168" width="12" height="2"/><rect x="15" y="172" width="12" height="2"/><rect x="15" y="176" width="12" height="2"/></g><path d="M47.2 172.6v-3.6a3.7 3.7 0 0 1 7.4 0v3.2" fill="none" stroke="#7da7f0" stroke-width="1.5"/><g transform="translate(50.9,167.4) scale(0.6,0.59) translate(-848.1,-572.3)"><path d="M846.4 586.6V574a1.700 1.700 0 0 1 3.400 0v4.500c.7-.9 2.300-.9 3 .1.800-.8 2.400-.6 3 .5 1.200-.6 2.900.1 2.900 1.600v7.800c0 4-3.200 6.900-7.200 6.900-3.200 0-5.200-1.800-7-4.400l-2.900-4.100c-1-1.500.800-2.800 2-1.700z" fill="#ffffff" stroke="#d8d8d8" stroke-width="1" stroke-linejoin="round"/><path d="M849.800 578.400v4.600M852.800 578.800v4.200M855.800 579.400v3.600" stroke="#9a9a9a" stroke-width="1" fill="none"/></g><path d="M77.600 165.400h7l3.900 3.900v11.300h-10.900z" fill="#ffffff"/><path d="M84.600 165.400l3.900 3.900h-3.900z" fill="#e4e4e4" stroke="#b4b4b4" stroke-width="0.500"/><g fill="#3c3c3c" shape-rendering="crispEdges"><rect x="82" y="178" width="1" height="1"/><rect x="84" y="178" width="1" height="1"/><rect x="86" y="178" width="1" height="1"/></g><path d="M112.500 180.600v-11.900h6.600l1.600 1.900h6v2.900" fill="#fbe3b3" stroke="#cf9450" stroke-width="0.900" stroke-linejoin="round"/><path d="M112.500 180.700l2.500-7.300h13.600l-3 7.300z" fill="#fce6b8" stroke="#cf9450" stroke-width="0.900" stroke-linejoin="round"/><path d="M157.600 165.400h15.400v15.300h-13.600l-1.800-1.800z" fill="#7eaaf2" stroke="#8a93a6" stroke-width="0.500"/><rect x="160.700" y="165.600" width="9" height="6.300" fill="#ffffff" stroke="#9c9c9c" stroke-width="0.500"/><rect x="161.600" y="176.500" width="7.200" height="4.100" fill="#ffffff" stroke="#9c9c9c" stroke-width="0.500"/><path d="M193.600 169.400A4 4 0 1 1 200.600 173.400L192.800 180.400" fill="none" stroke="#8e8e8e" stroke-width="1.700"/><path d="M188.800 171.400l5-5 1.400 5.800z" fill="#8e8e8e"/><path d="M236.400 169.400A4 4 0 1 0 229.400 173.400L237.200 180.400" fill="none" stroke="#6db9f2" stroke-width="1.700"/><path d="M241.200 171.400l-5-5-1.400 5.800z" fill="#6db9f2"/><path d="M277.400 165.200v12.600l2.900-2.600 2.400 5.500 1.900-.9-2.400-5.300h4.400z" fill="#e6e6e6"/><path d="M297.300 166l2.700 2.500-2.700 2.500M300.900 166l2.700 2.500-2.700 2.500" fill="none" stroke="#ffffff" stroke-width="1.500"/><path d="M327.900 167.400h6.600l3.700 3.700v11.100h-10.300z" fill="#ffffff"/><path d="M334.500 167.400l3.700 3.700h-3.700z" fill="#e0e0e0"/><g stroke="#ee8a8a" stroke-width="0.900"><path d="M329.200 174.400h7M329.200 176.400h7M329.200 178.400h7M329.200 180.400h7"/></g><rect x="336" y="174" width="7.200" height="9" fill="#e0101c"/><path d="M337.700 176.500h3.900M339.650 176.500v4.800" stroke="#ffffff" stroke-width="1.200" fill="none"/><path d="M505 171.800l7.200 7.200M512.200 171.800l-7.200 7.200" stroke="#cfcfcf" stroke-width="2.300" fill="none"/><circle cx="17.500" cy="201.600" r="7.900" fill="#ffffff" stroke="#c8c8c8" stroke-width="1"/><path d="M17.500 194.800l2.400 6.800h-4.800z" fill="#e8202a"/><path d="M17.500 208.400l2.400-6.800h-4.800z" fill="#9a9a9a"/><g fill="#ffffff" stroke="#bdbdbd" stroke-width="0.800"><rect x="39.400" y="194.400" width="7.400" height="5.800"/><rect x="39.400" y="202.800" width="7.400" height="5.800"/></g><path d="M69.300 203.300l5.200 5" stroke="#86b0ee" stroke-width="1.800" stroke-linecap="round"/><circle cx="66" cy="200.100" r="4" fill="#ffffff" stroke="#c4c4c4" stroke-width="0.700"/><path d="M266.500 199v5h5.500" fill="none" stroke="#ffffff" stroke-width="2"/><polygon points="249.400,432 249.400,437.200 246.200,434.600" fill="#ffffff"/><path d="M385 193h9v3.400l-4.500 5.600-4.500-5.600z" fill="#c8c8c8"/><path d="M389.500 202l4.500 4.600v3.400h-9v-3.400z" fill="#c8c8c8"/><rect x="385" y="210.800" width="9" height="6" fill="#c8c8c8"/><rect x="1013" y="194" width="1" height="9" fill="#ffffff"/><path d="M1013.500 203l4.500 4.400v2.600h-9v-2.600z" fill="#c8c8c8"/><path d="M1124.600 196.800l3.400-3.600 3.400 3.600" fill="none" stroke="#f0f0f0" stroke-width="1.800"/><path d="M1125 606.800l3.300 3.700 3.300-3.700" fill="none" stroke="#c6c6c6" stroke-width="2.400"/><g fill="#ffffff"><path d="M1127.600 621.600l3.100 3.300h-6.200z"/><path d="M1127.600 624.400l3.400 3.600h-6.800z"/><path d="M1127.600 661.200l3.100-3.300h-6.200z"/><path d="M1127.600 658.400l3.400-3.600h-6.800z"/></g><circle cx="1127.300" cy="640.200" r="2.700" fill="#f400ee"/><circle cx="1128" cy="640.800" r="2" fill="#e00012"/><path d="M846.4 586.6V574a1.700 1.700 0 0 1 3.400 0v4.500c.7-.9 2.300-.9 3 .1.800-.8 2.400-.6 3 .5 1.200-.6 2.900.1 2.900 1.600v7.800c0 4-3.200 6.900-7.200 6.900-3.200 0-5.200-1.800-7-4.400l-2.900-4.100c-1-1.500.800-2.800 2-1.700z" fill="#ffffff" stroke="#1c2030" stroke-width="1.200" stroke-linejoin="round"/><path d="M849.800 578.400v4.600M852.800 578.800v4.200M855.800 579.400v3.600" stroke="#1c2030" stroke-width="1.100" fill="none"/></svg>
<div class="t" style="left:198.40px;top:104.73px;font-size:14.5px;color:#f2f2f2;transform:scaleX(0.7642);font-weight:bold;">B</div>
<div class="t" style="left:228.20px;top:104.73px;font-size:14.5px;color:#f2f2f2;transform:scaleX(1.1222);font-weight:bold;font-style:italic;">I</div>
<div class="t" style="left:253.60px;top:104.73px;font-size:14.5px;color:#f2f2f2;transform:scaleX(0.8597);">U</div>
<div class="t" style="left:298.00px;top:106.00px;font-size:13px;color:#bdbdbd;transform:scaleX(0.8647);">ab</div>
<div class="t" style="left:328.00px;top:103.88px;font-size:15.5px;color:#a2a2a2;transform:scaleX(0.9515);font-weight:bold;-webkit-text-stroke:0.5px #a2a2a2;">x</div>
<div class="t" style="left:337.00px;top:115.00px;font-size:6.5px;color:#6ab8f2;transform:scaleX(0.8854);font-weight:bold;">2</div>
<div class="t" style="left:356.00px;top:103.88px;font-size:15.5px;color:#a2a2a2;transform:scaleX(0.9515);font-weight:bold;-webkit-text-stroke:0.5px #a2a2a2;">x</div>
<div class="t" style="left:365.00px;top:106.00px;font-size:6.5px;color:#6ab8f2;transform:scaleX(0.8854);font-weight:bold;">2</div>
<div class="t" style="left:383.20px;top:102.73px;font-size:14.5px;color:#ffffff;transform:scaleX(0.9926);">A</div>
<div class="t" style="left:430.00px;top:105.83px;font-size:10px;color:#000;transform:scaleX(0.8144);font-family:'Liberation Serif', serif;font-weight:bold;">ab</div>
<div class="t" style="left:468.20px;top:101.95px;font-size:14px;color:#3a3a3a;transform:scaleX(0.8139);">A</div>
<div class="t" style="left:498.40px;top:106.00px;font-size:13px;color:#cdcdcd;transform:scaleX(1.0149);">A</div>
<div class="t" style="left:527.00px;top:107.27px;font-size:11.5px;color:#cdcdcd;transform:scaleX(1.0951);">A</div>
<div class="t" style="left:470.40px;top:73.80px;font-size:12.4px;color:#3a3a3a;transform:scaleX(0.9224);">Aa</div>
<div class="t" style="left:738.60px;top:68.31px;font-size:10.5px;color:#989898;transform:scaleX(0.9234);font-weight:bold;-webkit-text-stroke:0.4px #989898;">A</div>
<div class="t" style="left:739.20px;top:76.31px;font-size:10.5px;color:#989898;transform:scaleX(0.9352);font-weight:bold;-webkit-text-stroke:0.4px #989898;">Z</div>
<div class="t" style="left:962.80px;top:63.00px;font-size:13px;color:#cacaca;transform:scaleX(0.7181);">a</div>
<div class="t" style="left:974.20px;top:63.00px;font-size:13px;color:#cacaca;transform:scaleX(0.7748);">b</div>
<div class="t" style="left:597.80px;top:68.24px;font-size:6.8px;color:#7fcdf7;transform:scaleX(0.9522);font-weight:bold;">1</div>
<div class="t" style="left:597.80px;top:73.64px;font-size:6.8px;color:#7fcdf7;transform:scaleX(0.9522);font-weight:bold;">2</div>
<div class="t" style="left:597.80px;top:79.04px;font-size:6.8px;color:#7fcdf7;transform:scaleX(0.9522);font-weight:bold;">3</div>
<div class="t" style="left:640.00px;top:68.24px;font-size:6.8px;color:#7fcdf7;transform:scaleX(0.7935);font-weight:bold;">1</div>
</div></body></html>
